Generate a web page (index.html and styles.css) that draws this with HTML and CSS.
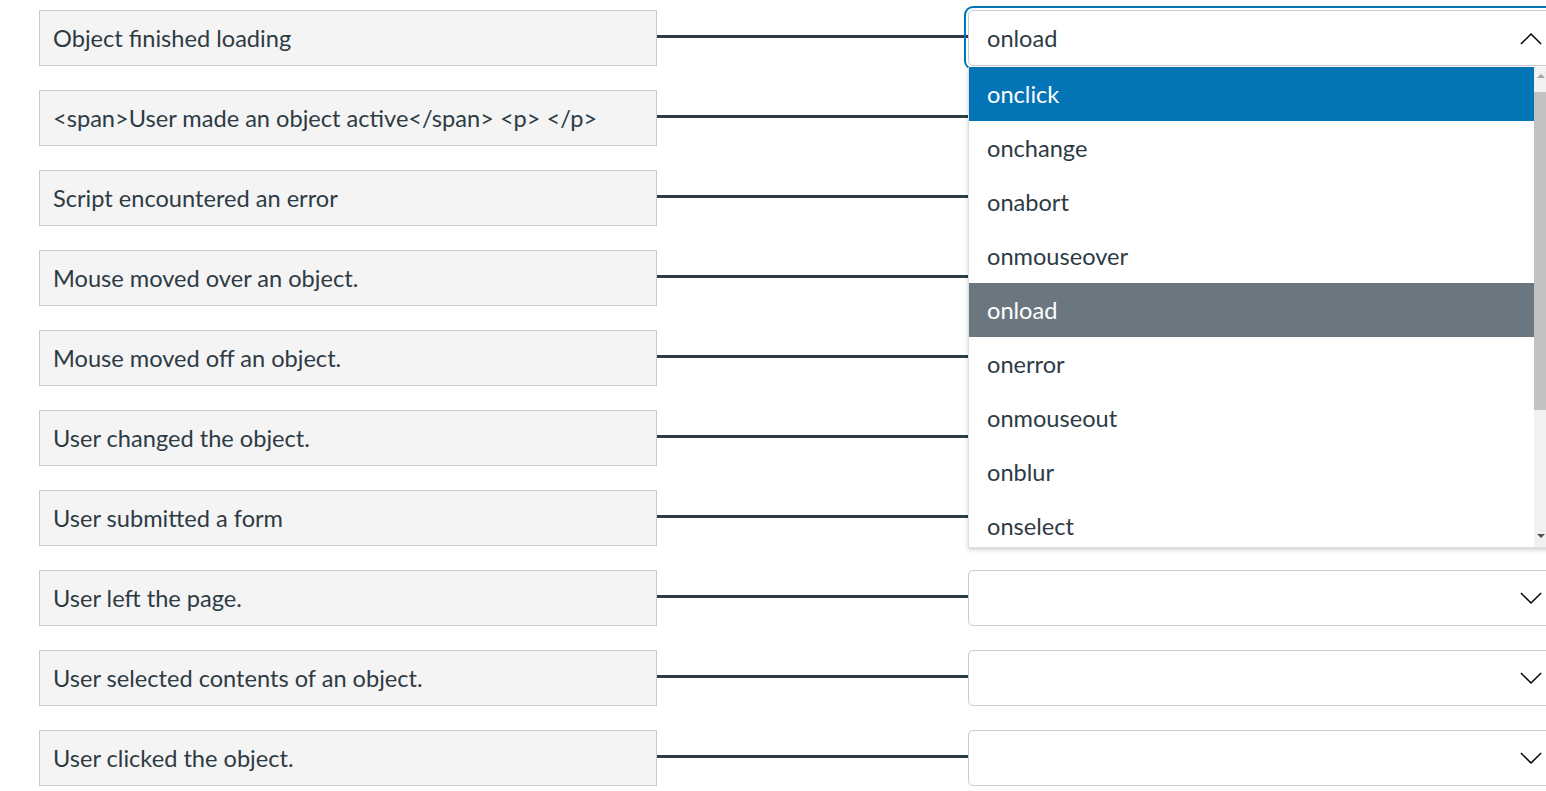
FILE: index.html
```html
<!DOCTYPE html>
<html>
<head>
<meta charset="utf-8">
<link rel="stylesheet" href="styles.css">
</head>
<body>
<div class="page">
  <div class="rows">
    <div class="row">
      <div class="prompt">Object finished loading</div>
      <div class="line"></div>
      <div class="select focused"><span class="value">onload</span><svg class="chev" viewBox="0 0 24 14"><path d="M1 13 L12 2 L23 13" fill="none" stroke="#000" stroke-width="1.6"/></svg></div>
    </div>
    <div class="row">
      <div class="prompt">&lt;span&gt;User made an object active&lt;/span&gt; &lt;p&gt; &lt;/p&gt;</div>
      <div class="line"></div>
      <div class="select"><span class="value"></span><svg class="chev" viewBox="0 0 24 14"><path d="M1 1 L12 12 L23 1" fill="none" stroke="#000" stroke-width="1.6"/></svg></div>
    </div>
    <div class="row">
      <div class="prompt">Script encountered an error</div>
      <div class="line"></div>
      <div class="select"><span class="value"></span><svg class="chev" viewBox="0 0 24 14"><path d="M1 1 L12 12 L23 1" fill="none" stroke="#000" stroke-width="1.6"/></svg></div>
    </div>
    <div class="row">
      <div class="prompt">Mouse moved over an object.</div>
      <div class="line"></div>
      <div class="select"><span class="value"></span><svg class="chev" viewBox="0 0 24 14"><path d="M1 1 L12 12 L23 1" fill="none" stroke="#000" stroke-width="1.6"/></svg></div>
    </div>
    <div class="row">
      <div class="prompt">Mouse moved off an object.</div>
      <div class="line"></div>
      <div class="select"><span class="value"></span><svg class="chev" viewBox="0 0 24 14"><path d="M1 1 L12 12 L23 1" fill="none" stroke="#000" stroke-width="1.6"/></svg></div>
    </div>
    <div class="row">
      <div class="prompt">User changed the object.</div>
      <div class="line"></div>
      <div class="select"><span class="value"></span><svg class="chev" viewBox="0 0 24 14"><path d="M1 1 L12 12 L23 1" fill="none" stroke="#000" stroke-width="1.6"/></svg></div>
    </div>
    <div class="row">
      <div class="prompt">User submitted a form</div>
      <div class="line"></div>
      <div class="select"><span class="value"></span><svg class="chev" viewBox="0 0 24 14"><path d="M1 1 L12 12 L23 1" fill="none" stroke="#000" stroke-width="1.6"/></svg></div>
    </div>
    <div class="row">
      <div class="prompt">User left the page.</div>
      <div class="line"></div>
      <div class="select"><span class="value"></span><svg class="chev" viewBox="0 0 24 14"><path d="M1 1 L12 12 L23 1" fill="none" stroke="#000" stroke-width="1.6"/></svg></div>
    </div>
    <div class="row">
      <div class="prompt">User selected contents of an object.</div>
      <div class="line"></div>
      <div class="select"><span class="value"></span><svg class="chev" viewBox="0 0 24 14"><path d="M1 1 L12 12 L23 1" fill="none" stroke="#000" stroke-width="1.6"/></svg></div>
    </div>
    <div class="row">
      <div class="prompt">User clicked the object.</div>
      <div class="line"></div>
      <div class="select"><span class="value"></span><svg class="chev" viewBox="0 0 24 14"><path d="M1 1 L12 12 L23 1" fill="none" stroke="#000" stroke-width="1.6"/></svg></div>
    </div>
  </div>

  <div class="dropdown">
    <ul class="options">
      <li class="opt active">onclick</li>
      <li class="opt">onchange</li>
      <li class="opt">onabort</li>
      <li class="opt">onmouseover</li>
      <li class="opt selected">onload</li>
      <li class="opt">onerror</li>
      <li class="opt">onmouseout</li>
      <li class="opt">onblur</li>
      <li class="opt">onselect</li>
    </ul>
    <div class="scrollbar">
      <div class="arrow up"></div>
      <div class="thumb"></div>
      <div class="arrow down"></div>
    </div>
  </div>
</div>
</body>
</html>
```

FILE: styles.css
```css
* { box-sizing: border-box; }
html, body { margin: 0; padding: 0; background: #fff; }
body {
  font-family: Lato, "Open Sans", sans-serif;
  color: #2d3b45;
  overflow: hidden;
  width: 1546px;
  height: 791px;
}
.page {
  position: relative;
  width: 1546px;
  height: 791px;
  overflow: hidden;
}
.rows {
  padding-top: 10px;
  padding-left: 39px;
  display: flex;
  flex-direction: column;
  gap: 24px;
}
.row {
  display: flex;
  align-items: center;
  height: 56px;
}
.prompt {
  width: 618px;
  height: 56px;
  flex: none;
  background: #f4f4f4;
  border: 1px solid #c7cdd1;
  display: flex;
  align-items: center;
  padding-left: 13px;
  font-size: 23.6px;
  white-space: nowrap;
}
.line {
  width: 311px;
  height: 3px;
  flex: none;
  background: #2d3b45;
  margin-top: -3px;
}
.select {
  width: 620px;
  height: 56px;
  flex: none;
  border: 1px solid #c7cdd1;
  border-radius: 5px;
  background: #fff;
  display: flex;
  align-items: center;
  padding-left: 18px;
  font-size: 23.6px;
  position: relative;
}
.select.focused {
  outline: 2px solid #0374b5;
  outline-offset: 2px;
}
.value { flex: 1; }
.chev {
  position: absolute;
  left: 551px;
  top: 21px;
  width: 22px;
  height: 13px;
}
.dropdown {
  position: absolute;
  left: 968px;
  top: 67px;
  width: 590px;
  height: 481px;
  background: #fff;
  border: 1px solid #dcdfe1;
  border-top: none;
  box-shadow: 0 2px 4px rgba(0,0,0,0.18);
  overflow: hidden;
  display: flex;
}
.options {
  list-style: none;
  margin: 0;
  padding: 0;
  width: 565px;
  flex: none;
}
.opt {
  height: 54px;
  display: flex;
  align-items: center;
  padding-left: 18px;
  font-size: 23.6px;
  color: #2d3b45;
}
.opt.active { background: #0374b5; color: #fff; }
.opt.selected { background: #6b7780; color: #fff; }
.scrollbar {
  width: 12px;
  flex: none;
  background: #f1f1f1;
  position: relative;
  height: 100%;
}
.thumb {
  position: absolute;
  left: 0;
  top: 25px;
  width: 12px;
  height: 318px;
  background: #c1c1c1;
}
.arrow {
  position: absolute;
  left: 3px;
  width: 0;
  height: 0;
  border-left: 4px solid transparent;
  border-right: 4px solid transparent;
}
.arrow.up { top: 7px; border-bottom: 4px solid #a3a3a3; }
.arrow.down { bottom: 9px; border-top: 4px solid #505050; }
```
